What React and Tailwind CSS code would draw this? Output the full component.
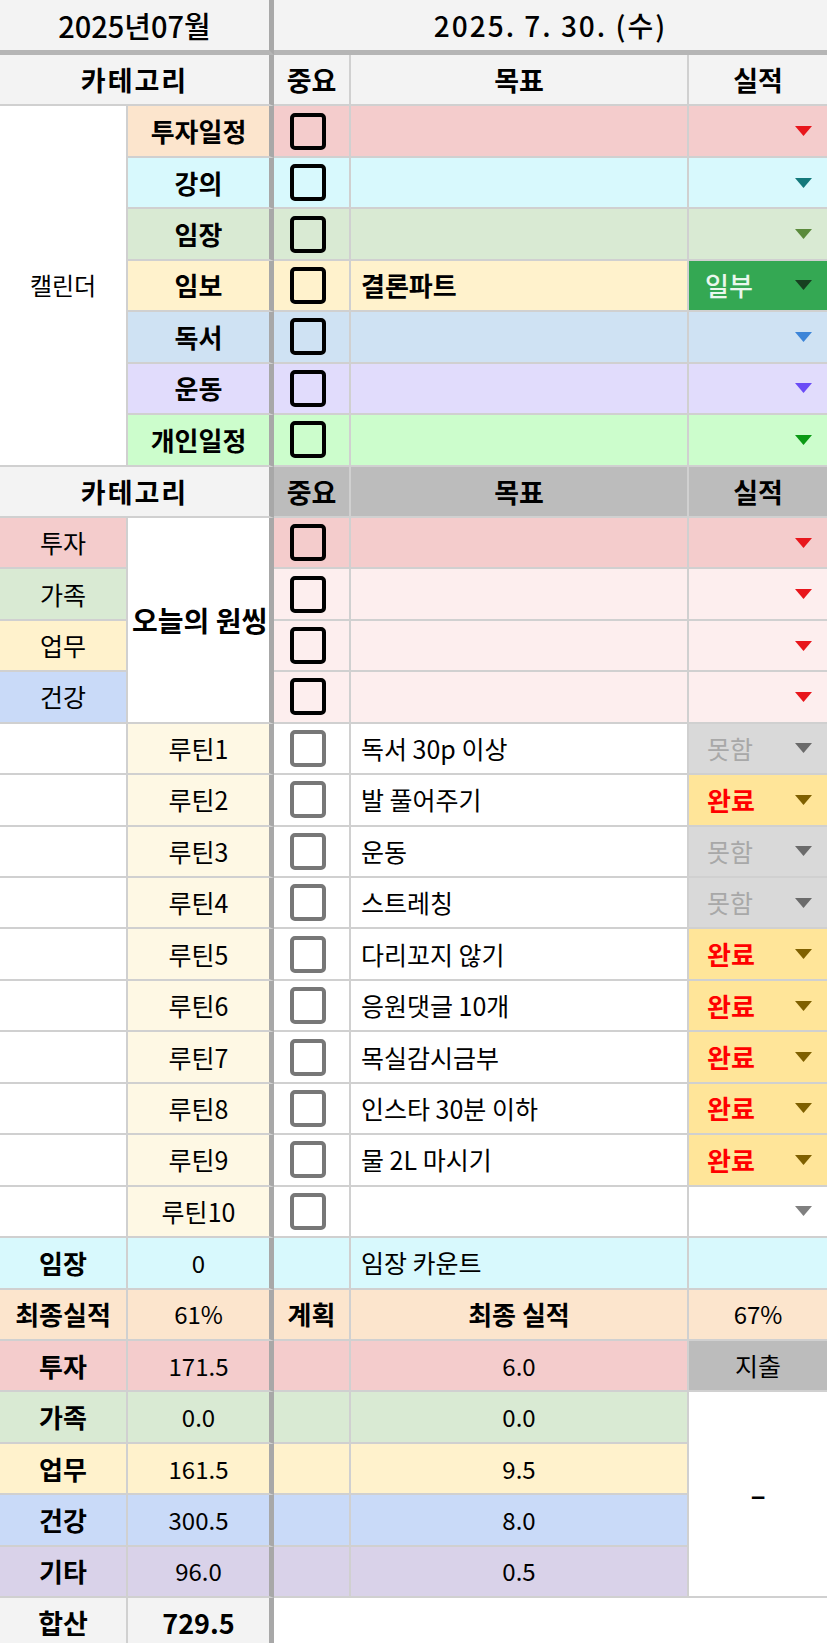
import React from "react";

const bA = "border-r-2 border-b-2 border-[#d0d0d0]";
const bB = "border-r-[5px] border-b-2 border-[#d0d0d0] border-r-[#a8a8a8]";
const bE = "border-b-2 border-[#d0d0d0]";

function Tri({ color, w = 17, h = 10 }) {
  return (
    <svg width={w} height={h} viewBox="0 0 17 10" className="shrink-0">
      <polygon points="0,0 17,0 8.5,10" fill={color} />
    </svg>
  );
}

function Box({ grey }) {
  return (
    <div
      className={
        grey
          ? "w-9 h-[37px] rounded-[5px] border-4 border-[#777777]"
          : "w-9 h-[37px] rounded-[5px] border-4 border-black"
      }
    />
  );
}

const cal = [
  { label: "투자일정", lb: "bg-[#fce5cd]", bg: "bg-[#f4cccc]", tri: "#e8161c" },
  { label: "강의", lb: "bg-[#d8f9fd]", bg: "bg-[#d8f9fd]", tri: "#14797b" },
  { label: "임장", lb: "bg-[#d9ead3]", bg: "bg-[#d9ead3]", tri: "#5b8a3c" },
  { label: "임보", lb: "bg-[#fff2cc]", bg: "bg-[#fff2cc]", goal: "결론파트", part: true },
  { label: "독서", lb: "bg-[#cfe2f3]", bg: "bg-[#cfe2f3]", tri: "#3d85d8" },
  { label: "운동", lb: "bg-[#e1dcfc]", bg: "bg-[#e1dcfc]", tri: "#6b4cf6" },
  { label: "개인일정", lb: "bg-[#ccfdcc]", bg: "bg-[#ccfdcc]", tri: "#0a9a14" },
];

const one = [
  { label: "투자", lb: "bg-[#f4cccc]", bg: "bg-[#f4cccc]" },
  { label: "가족", lb: "bg-[#d9ead3]", bg: "bg-[#fdeeee]" },
  { label: "업무", lb: "bg-[#fff2cc]", bg: "bg-[#fdeeee]" },
  { label: "건강", lb: "bg-[#c9daf8]", bg: "bg-[#fdeeee]" },
];

const routines = [
  ["독서 30p 이상", "no"],
  ["발 풀어주기", "ok"],
  ["운동", "no"],
  ["스트레칭", "no"],
  ["다리꼬지 않기", "ok"],
  ["응원댓글 10개", "ok"],
  ["목실감시금부", "ok"],
  ["인스타 30분 이하", "ok"],
  ["물 2L 마시기", "ok"],
  ["", ""],
];

const sums = [
  { label: "투자", a: "171.5", b: "6.0", bg: "bg-[#f4cccc]" },
  { label: "가족", a: "0.0", b: "0.0", bg: "bg-[#d9ead3]" },
  { label: "업무", a: "161.5", b: "9.5", bg: "bg-[#fff2cc]" },
  { label: "건강", a: "300.5", b: "8.0", bg: "bg-[#c9daf8]" },
  { label: "기타", a: "96.0", b: "0.5", bg: "bg-[#d9d2e9]" },
];

export default function App() {
  const cells = [];
  let k = 0;
  const add = (el) => cells.push(React.cloneElement(el, { key: k++ }));

  // header row
  add(
    <div className="col-span-2 flex items-center justify-center bg-[#f3f3f3] border-b-[5px] border-r-[5px] border-b-[#b5b5b5] border-r-[#a8a8a8] text-[29px] font-medium">
      2025년07월
    </div>
  );
  add(
    <div className="col-span-3 flex items-center justify-center bg-[#f3f3f3] border-b-[5px] border-b-[#b5b5b5] text-[28px] font-medium tracking-[2px]">
      2025. 7. 30. (수)
    </div>
  );

  // category header 1
  add(<div className={`col-span-2 flex items-center justify-center bg-[#f3f3f3] text-[27px] font-bold tracking-[2px] ${bB}`}>카테고리</div>);
  add(<div className={`flex items-center justify-center bg-[#f3f3f3] text-[27px] font-bold ${bA}`}>중요</div>);
  add(<div className={`flex items-center justify-center bg-[#f3f3f3] text-[27px] font-bold ${bA}`}>목표</div>);
  add(<div className={`flex items-center justify-center bg-[#f3f3f3] text-[27px] font-bold ${bE}`}>실적</div>);

  // calendar rows
  cal.forEach((r, i) => {
    if (i === 0)
      add(<div className={`row-span-7 flex items-center justify-center bg-white text-[24px] ${bA}`}>캘린더</div>);
    add(<div className={`flex items-center justify-center text-[26px] font-bold ${r.lb} ${bB}`}>{r.label}</div>);
    add(<div className={`flex items-center pl-4 ${r.bg} ${bA}`}><Box /></div>);
    add(<div className={`flex items-center pl-[10px] text-[26px] font-bold ${r.bg} ${bA}`}>{r.goal || ""}</div>);
    if (r.part)
      add(
        <div className={`flex items-center justify-between pl-[16px] pr-[15px] bg-[#34a853] text-[#eaf7ee] text-[26px] font-medium ${bE}`}>
          <span>일부</span>
          <Tri color="#173f20" />
        </div>
      );
    else
      add(
        <div className={`flex items-center justify-end pr-[15px] ${r.bg} ${bE}`}>
          <Tri color={r.tri} />
        </div>
      );
  });

  // category header 2
  add(<div className={`col-span-2 flex items-center justify-center bg-[#f3f3f3] text-[27px] font-bold tracking-[2px] ${bB}`}>카테고리</div>);
  add(<div className={`flex items-center justify-center bg-[#bcbcbc] text-[27px] font-bold ${bA}`}>중요</div>);
  add(<div className={`flex items-center justify-center bg-[#bcbcbc] text-[27px] font-bold ${bA}`}>목표</div>);
  add(<div className={`flex items-center justify-center bg-[#bcbcbc] text-[27px] font-bold ${bE}`}>실적</div>);

  // one thing rows
  one.forEach((r, i) => {
    add(<div className={`flex items-center justify-center text-[25px] ${r.lb} ${bA}`}>{r.label}</div>);
    if (i === 0)
      add(
        <div className={`row-span-4 flex items-center pl-[4px] bg-white text-[28px] font-bold whitespace-nowrap overflow-hidden ${bB}`}>
          오늘의 원씽
        </div>
      );
    add(<div className={`flex items-center pl-4 ${r.bg} ${bA}`}><Box /></div>);
    add(<div className={`${r.bg} ${bA}`} />);
    add(
      <div className={`flex items-center justify-end pr-[15px] ${r.bg} ${bE}`}>
        <Tri color="#e8161c" />
      </div>
    );
  });

  // routines
  routines.forEach(([goal, st], i) => {
    add(<div className={`bg-white ${bA}`} />);
    add(<div className={`flex items-center justify-center bg-[#fef8e4] text-[25px] ${bB}`}>루틴{i + 1}</div>);
    add(<div className={`flex items-center pl-4 bg-white ${bA}`}><Box grey /></div>);
    add(<div className={`flex items-center pl-[10px] bg-white text-[25px] whitespace-nowrap ${bA}`}>{goal}</div>);
    if (st === "ok")
      add(
        <div className={`flex items-center justify-between pl-[18px] pr-[15px] bg-[#ffe599] text-[#ff0000] text-[26px] font-bold ${bE}`}>
          <span>완료</span>
          <Tri color="#7f6000" />
        </div>
      );
    else if (st === "no")
      add(
        <div className={`flex items-center justify-between pl-[18px] pr-[15px] bg-[#d9d9d9] text-[#a8a8a8] text-[25px] ${bE}`}>
          <span>못함</span>
          <Tri color="#6b6b6b" />
        </div>
      );
    else
      add(
        <div className={`flex items-center justify-end pr-[15px] bg-white ${bE}`}>
          <Tri color="#808080" />
        </div>
      );
  });

  // 임장 row
  add(<div className={`flex items-center justify-center bg-[#d8f9fd] text-[26px] font-bold ${bA}`}>임장</div>);
  add(<div className={`flex items-center justify-center bg-[#d8f9fd] text-[24px] ${bB}`}>0</div>);
  add(<div className={`bg-[#d8f9fd] ${bA}`} />);
  add(<div className={`flex items-center pl-[10px] bg-[#d8f9fd] text-[25px] ${bA}`}>임장 카운트</div>);
  add(<div className={`bg-[#d8f9fd] ${bE}`} />);

  // 최종실적 row
  add(<div className={`flex items-center justify-center bg-[#fce5cd] text-[26px] font-bold whitespace-nowrap ${bA}`}>최종실적</div>);
  add(<div className={`flex items-center justify-center bg-[#fce5cd] text-[24px] ${bB}`}>61%</div>);
  add(<div className={`flex items-center justify-center bg-[#fce5cd] text-[26px] font-bold ${bA}`}>계획</div>);
  add(<div className={`flex items-center justify-center bg-[#fce5cd] text-[26px] font-bold ${bA}`}>최종 실적</div>);
  add(<div className={`flex items-center justify-center bg-[#fce5cd] text-[24px] ${bE}`}>67%</div>);

  // sums
  sums.forEach((r, i) => {
    add(<div className={`flex items-center justify-center text-[26px] font-bold ${r.bg} ${bA}`}>{r.label}</div>);
    add(<div className={`flex items-center justify-center text-[24px] ${r.bg} ${bB}`}>{r.a}</div>);
    add(<div className={`${r.bg} ${bA}`} />);
    add(<div className={`flex items-center justify-center text-[24px] ${r.bg} ${bA}`}>{r.b}</div>);
    if (i === 0)
      add(<div className={`flex items-center justify-center bg-[#bcbcbc] text-[25px] ${bE}`}>지출</div>);
    if (i === 1)
      add(<div className={`row-span-4 flex items-center justify-center bg-white text-[28px] font-bold ${bE}`}>–</div>);
  });

  // 합산
  add(<div className={`flex items-center justify-center bg-[#f3f3f3] text-[27px] font-bold ${bA}`}>합산</div>);
  add(<div className={`flex items-center justify-center bg-[#f3f3f3] text-[27px] font-semibold ${bB}`}>729.5</div>);
  add(<div className="col-span-3 bg-white" />);

  return (
    <div className="w-[827px] bg-white text-black leading-none font-['Noto_Sans_CJK_KR','Noto_Sans',sans-serif]">
      <div className="grid grid-cols-[128px_146px_77px_338px_138px] grid-rows-[55px_repeat(31,51.45px)]">
        {cells}
      </div>
    </div>
  );
}
